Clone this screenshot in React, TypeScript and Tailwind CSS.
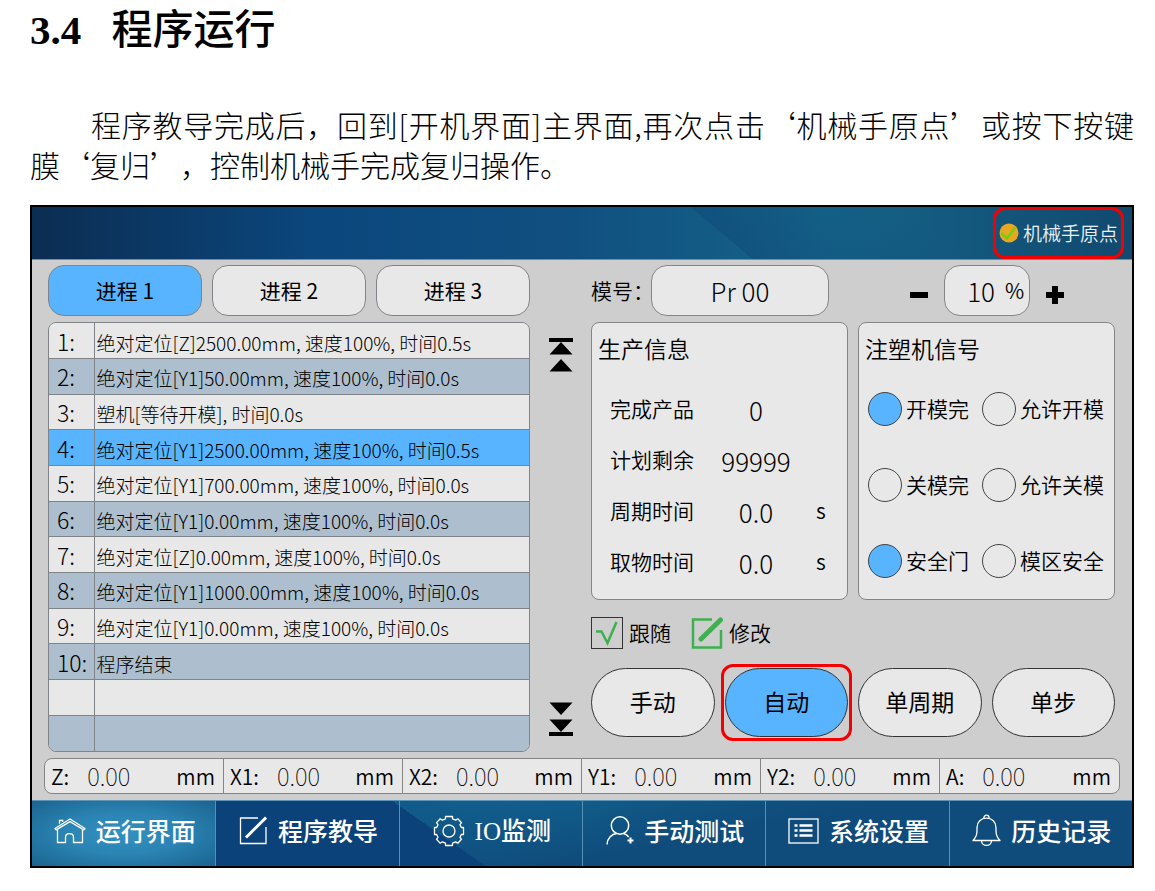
import { useState, type ReactNode } from 'react';

interface Step {
  no: string;
  text: string;
}

const steps: Step[] = [
  { no: '1:', text: '绝对定位[Z]2500.00mm, 速度100%, 时间0.5s' },
  { no: '2:', text: '绝对定位[Y1]50.00mm, 速度100%, 时间0.0s' },
  { no: '3:', text: '塑机[等待开模], 时间0.0s' },
  { no: '4:', text: '绝对定位[Y1]2500.00mm, 速度100%, 时间0.5s' },
  { no: '5:', text: '绝对定位[Y1]700.00mm, 速度100%, 时间0.0s' },
  { no: '6:', text: '绝对定位[Y1]0.00mm, 速度100%, 时间0.0s' },
  { no: '7:', text: '绝对定位[Z]0.00mm, 速度100%, 时间0.0s' },
  { no: '8:', text: '绝对定位[Y1]1000.00mm, 速度100%, 时间0.0s' },
  { no: '9:', text: '绝对定位[Y1]0.00mm, 速度100%, 时间0.0s' },
  { no: '10:', text: '程序结束' },
  { no: '', text: '' },
  { no: '', text: '' },
];

const production = [
  { label: '完成产品', value: '0', unit: '' },
  { label: '计划剩余', value: '99999', unit: '' },
  { label: '周期时间', value: '0.0', unit: 's' },
  { label: '取物时间', value: '0.0', unit: 's' },
];

const signals = [
  { label: '开模完', on: true },
  { label: '允许开模', on: false },
  { label: '关模完', on: false },
  { label: '允许关模', on: false },
  { label: '安全门', on: true },
  { label: '模区安全', on: false },
];

const axes = ['Z:', 'X1:', 'X2:', 'Y1:', 'Y2:', 'A:'];
const processes = ['进程 1', '进程 2', '进程 3'];
const modes = ['手动', '自动', '单周期', '单步'];

// Icons
const HomeIcon = () => (
  <svg width="32" height="26" viewBox="0 0 32 26" fill="none" stroke="currentColor" strokeWidth="1.3" aria-hidden="true">
    <path d="M1 10.5 16 1l15 9.5-1.2 1.4L16 3.6 2.2 11.9z" strokeLinejoin="round" />
    <path d="M5.5 5.8V2.5h3.2v1.4M3.5 12v12.5h8v-5.2c0-5 8-5 8 0v5.200h9V12" />
  </svg>
);

const EditIcon = () => (
  <svg width="29" height="29" viewBox="0 0 29 29" fill="none" stroke="currentColor" aria-hidden="true">
    <path d="M19 2H1.5v25.5H27V11" strokeWidth="1.3" />
    <path d="M8 20.5 26 2.5" strokeWidth="3" strokeLinecap="square" />
  </svg>
);

const GearIcon = () => (
  <svg width="32" height="32" viewBox="0 0 32 32" fill="none" stroke="currentColor" strokeWidth="1.3" aria-hidden="true">
    <circle cx="16" cy="16" r="6" />
    <path
      d="M12.5 1.5h7v2.3l3.2 1.3 2.1-1.3 3.7 3.9-1.5 2 1.3 2.8h2.2v7h-2.2l-1.3 2.8 1.5 2-3.7 3.9-2.1-1.3-3.2 1.3v2.3h-7v-2.3l-3.2-1.3-2.1 1.3-3.7-3.9 1.5-2-1.3-2.8H1.5v-7h2.2L5 9.7l-1.5-2 3.7-3.9 2.1 1.3 3.2-1.3z"
      strokeLinejoin="round"
    />
  </svg>
);

const UserIcon = () => (
  <svg width="28" height="29" viewBox="0 0 28 29" fill="none" stroke="currentColor" strokeWidth="1.5" aria-hidden="true">
    <circle cx="14" cy="9.5" r="8.7" />
    <path d="M1 28.5c.3-6.5 5-10.5 9.5-11M17.5 17.5c2.2.5 4 1.6 5.2 3.5" />
    <path d="M24.5 21.5v6M21.5 24.5h6" strokeWidth="2" />
  </svg>
);

const ListIcon = () => (
  <svg width="31" height="26" viewBox="0 0 31 26" fill="none" stroke="currentColor" aria-hidden="true">
    <rect x="1" y="1" width="29" height="24" strokeWidth="1.3" />
    <path d="M11.5 7.5h13M11.5 12.5h13M11.5 17.5h13" strokeWidth="2.5" />
    <path d="M6.5 7.5h3M6.5 12.5h3M6.5 17.5h3" strokeWidth="2.5" />
  </svg>
);

const BellIcon = () => (
  <svg width="29" height="33" viewBox="0 0 29 33" fill="none" stroke="currentColor" strokeWidth="1.3" aria-hidden="true">
    <path d="M1 26.5c3-3 4-5 4-9.500V13.5c0-5.5 4-9.3 9.5-9.3s9.5 3.8 9.5 9.3V17c0 4.5 1 6.500 4 9.5z" strokeLinejoin="round" />
    <path d="M11.8 4.4C11.8 0 17.2 0 17.2 4.4M9.5 26.5c0 6.5 10 6.5 10 0" />
  </svg>
);

const ScrollEndIcon = ({ flip }: { flip?: boolean }) => (
  <svg width="24" height="34" viewBox="0 0 24 34" fill="currentColor" className={flip ? 'rotate-180' : ''} aria-hidden="true">
    <path d="M0 0h24v4H0zM12 4l11.5 12.5H.5zM12 21l11.5 12.5H.5z" />
  </svg>
);

interface NavItem {
  icon: ReactNode;
  label: ReactNode;
}

const navItems: NavItem[] = [
  { icon: <HomeIcon />, label: '运行界面' },
  { icon: <EditIcon />, label: '程序教导' },
  {
    icon: <GearIcon />,
    label: (
      <>
        <span className="font-['Liberation_Serif',serif] font-normal">IO</span>监测
      </>
    ),
  },
  { icon: <UserIcon />, label: '手动测试' },
  { icon: <ListIcon />, label: '系统设置' },
  { icon: <BellIcon />, label: '历史记录' },
];

const TopBar = () => (
  <header className="flex h-[53px] justify-end border-b border-[#5f93b8] bg-[linear-gradient(40deg,transparent_62%,#0f4a7a88_62%,#0f4a7a00_80%),linear-gradient(90deg,#0b2d52_0%,#0b467c_25%,#104f80_48%,#156489_72%,#12496f_100%)] pr-2">
    {/* Highlighted: home position */}
    <button type="button" className="flex items-center gap-1 rounded-xl border-[3px] border-[#f40000] px-[3px] text-[19px] font-[350] text-[#e6f0f5]">
      <svg width="20" height="20" viewBox="0 0 20 20" aria-hidden="true">
        <circle cx="10" cy="10" r="9.5" fill="#e8a723" />
        <path d="M2.5 10 8 15.5l8-11" fill="none" stroke="#6cd012" strokeWidth="2.2" />
      </svg>
      机械手原点
    </button>
  </header>
);

const StepTable = ({ active }: { active: number }) => (
  <div className="overflow-hidden rounded-lg border border-[#808488]">
    <table className="h-[428px] w-full border-collapse font-light">
      <tbody>
        {steps.map((step, i) => (
          <tr
            key={i}
            className={`h-[35px] border-b border-[#808488] last:border-b-0 ${
              i === active ? 'bg-[#58b4ff]' : i % 2 ? 'bg-[#adbfce]' : 'bg-[#e8e8e8]'
            }`}
          >
            <th scope="row" className="w-[45px] border-r border-[#808488] p-0 pl-2 text-left text-[23px] leading-7 font-light">
              {step.no}
            </th>
            <td className="p-0 pt-1 pl-0.5 text-[19px] leading-7 whitespace-nowrap">{step.text}</td>
          </tr>
        ))}
      </tbody>
    </table>
  </div>
);

const ProductionPanel = () => (
  <section className="rounded-lg border border-[#858585] bg-[#e8e8e8]">
    <h2 className="px-1.5 pt-[9px] pb-[18px] text-[23px] leading-8">生产信息</h2>
    <dl className="pb-1 pl-[18px]">
      {production.map((row) => (
        <div key={row.label} className="grid h-[51px] grid-cols-[102px_88px_1fr] items-center">
          <dt className="text-[21px] leading-8">{row.label}</dt>
          <dd className="pt-1 text-center text-[26px] leading-8 font-light">{row.value}</dd>
          <dd className="pl-4 text-[21px] leading-8">{row.unit}</dd>
        </div>
      ))}
    </dl>
  </section>
);

const SignalPanel = () => (
  <section className="rounded-lg border border-[#858585] bg-[#e8e8e8]">
    <h2 className="px-1.5 pt-[9px] pb-[7px] text-[23px] leading-8">注塑机信号</h2>
    <div className="grid grid-cols-[114px_1fr] pl-[9px]">
      {signals.map((signal) => (
        <label key={signal.label} className="flex h-[76px] items-center gap-1 text-[21px] whitespace-nowrap">
          <input
            type="checkbox"
            defaultChecked={signal.on}
            className="size-[34px] shrink-0 appearance-none rounded-full border border-[#444] checked:bg-[#58b4ff]"
          />
          {signal.label}
        </label>
      ))}
    </div>
  </section>
);

export default function App() {
  const [process, setProcess] = useState(0);
  const [mode, setMode] = useState(1);
  const [speed, setSpeed] = useState(10);

  return (
    <main className="min-h-screen bg-white pr-[21px] pb-5 pl-[30px] font-['Noto_Sans_CJK_SC',sans-serif] font-[350] text-black" lang="zh-CN">
      <h1 className="pt-1.5 font-['Liberation_Serif','Noto_Sans_CJK_SC',sans-serif] text-[41px] leading-[48px] font-medium">
        <span className="mr-5 font-bold">3.4</span> 程序运行
      </h1>
      <p className="pt-[50px] text-justify indent-[61px] text-[30px] leading-10 font-light [text-spacing-trim:space-all]">
        程序教导完成后，回到[开机界面]主界面,再次点击‘机械手原点’或按下按键膜‘复归’，控制机械手完成复归操作。
      </p>

      <div className="mt-[21px] border-2 border-black bg-[#cecece]">
        <TopBar />

        <div className="grid grid-cols-[482fr_61px_524fr] gap-y-1.5 pt-[5px] pr-[17px] pl-4">
          {/* Process tabs */}
          <div className="grid grid-cols-3 gap-2.5">
            {processes.map((name, i) => (
              <button
                key={name}
                type="button"
                onClick={() => setProcess(i)}
                className={`h-[51px] rounded-2xl border border-[#808488] text-[21px] font-normal ${i === process ? 'bg-[#58b4ff]' : 'bg-[#e8e8e8]'}`}
              >
                {name}
              </button>
            ))}
          </div>
          <div />

          {/* Mold number and speed */}
          <div className="flex items-center">
            <label htmlFor="mold" className="w-[60px] shrink-0 text-[21px] whitespace-nowrap">
              模号：
            </label>
            <input
              id="mold"
              defaultValue="Pr 00"
              className="h-[51px] w-[178px] rounded-2xl border border-[#858585] bg-[#e8e8e8] text-center text-[26px] font-light"
            />
            <div className="ml-auto flex items-center pr-[51px]">
              <button type="button" aria-label="减速" onClick={() => setSpeed(speed - 1)} className="pt-2">
                <svg width="18" height="18" viewBox="0 0 18 18" aria-hidden="true">
                  <path d="M0 6h18v6H0z" />
                </svg>
              </button>
              <label className="mx-4 flex h-[51px] w-[86px] items-center gap-2.5 rounded-2xl border border-[#858585] bg-[#e8e8e8] pl-[18px] text-[21px]">
                <input
                  aria-label="速度"
                  value={speed}
                  onChange={(e) => setSpeed(Number(e.target.value))}
                  className="w-8 bg-transparent text-right text-[26px] font-light"
                />
                %
              </label>
              <button type="button" aria-label="加速" onClick={() => setSpeed(speed + 1)} className="pt-2">
                <svg width="18" height="18" viewBox="0 0 18 18" aria-hidden="true">
                  <path d="M0 6h6V0h6v6h6v6h-6v6H6v-6H0z" />
                </svg>
              </button>
            </div>
          </div>

          <StepTable active={3} />

          <div className="flex flex-col items-center justify-between py-4">
            <button type="button" aria-label="第一行">
              <ScrollEndIcon />
            </button>
            <button type="button" aria-label="最后一行">
              <ScrollEndIcon flip />
            </button>
          </div>

          <div>
            <div className="grid grid-cols-2 gap-2.5">
              <ProductionPanel />
              <SignalPanel />
            </div>

            <div className="flex h-[66px] items-center gap-5 text-[21px]">
              <label className="flex items-center gap-1.5">
                <span className="grid">
                  <input type="checkbox" defaultChecked className="peer col-start-1 row-start-1 size-8 appearance-none border border-[#333]" />
                  <svg
                    width="32"
                    height="32"
                    viewBox="0 0 32 32"
                    className="pointer-events-none invisible col-start-1 row-start-1 peer-checked:visible"
                    aria-hidden="true"
                  >
                    <path d="M5 14.5h5.5L16.5 26l9-21" fill="none" stroke="#3fb04f" strokeWidth="2.5" />
                  </svg>
                </span>
                跟随
              </label>
              <button type="button" className="flex items-center gap-1.5">
                <svg width="32" height="32" viewBox="0 0 32 32" fill="none" stroke="#3fb04f" aria-hidden="true">
                  <path d="M21 2.5H2v28h28V13" strokeWidth="2.5" />
                  <path d="M10 22 29.5 3" strokeWidth="5" strokeLinecap="round" />
                </svg>
                修改
              </button>
            </div>

            {/* Mode buttons */}
            <div className="grid grid-cols-4 gap-2.5 pt-0.5">
              {modes.map((name, i) => (
                <div key={name} className="relative">
                  <button
                    type="button"
                    onClick={() => setMode(i)}
                    className={`block h-[69px] w-full rounded-full border border-[#333] pb-0.5 text-[23px] font-normal ${i === mode ? 'bg-[#58b4ff]' : 'bg-[#e8e8e8]'}`}
                  >
                    {name}
                  </button>
                  {name === '自动' && (
                    <span className="pointer-events-none absolute -inset-1 rounded-xl border-[3px] border-[#f40000]" />
                  )}
                </div>
              ))}
            </div>
          </div>
        </div>

        {/* Axis positions */}
        <dl className="mx-3 my-1.5 grid grid-cols-6 divide-x divide-[#858585] rounded-lg border border-[#858585] bg-[#e8e8e8]">
          {axes.map((axis) => (
            <div key={axis} className="flex items-center pr-2 pl-1.5 text-[21px] leading-[34px]">
              <dt className="mr-[18px]">{axis}</dt>
              <dd className="text-[24px] font-thin">0.00</dd>
              <dd className="ml-auto">mm</dd>
            </div>
          ))}
        </dl>

        <nav className="grid grid-cols-6 border-t border-[#5f93b8] bg-[linear-gradient(215deg,transparent_62%,#0b427a_62%),linear-gradient(170deg,transparent_30%,#0f4c7c_60%),linear-gradient(90deg,#0c4a80,#12628f_50%,#0f4468)]">
          {navItems.map((item, i) => (
            <a
              key={i}
              href="#"
              className={`flex h-[65px] items-center justify-center gap-2.5 border-[#5790b5] pb-1.5 pl-0.5 text-[25px] font-medium whitespace-nowrap text-white ${
                i === 0 ? 'bg-[radial-gradient(ellipse_at_center,#3291c0_0%,#2b84b3_45%,#1a638f_100%)]' : 'border-l'
              }`}
            >
              {item.icon}
              <span>{item.label}</span>
            </a>
          ))}
        </nav>
      </div>
    </main>
  );
}
